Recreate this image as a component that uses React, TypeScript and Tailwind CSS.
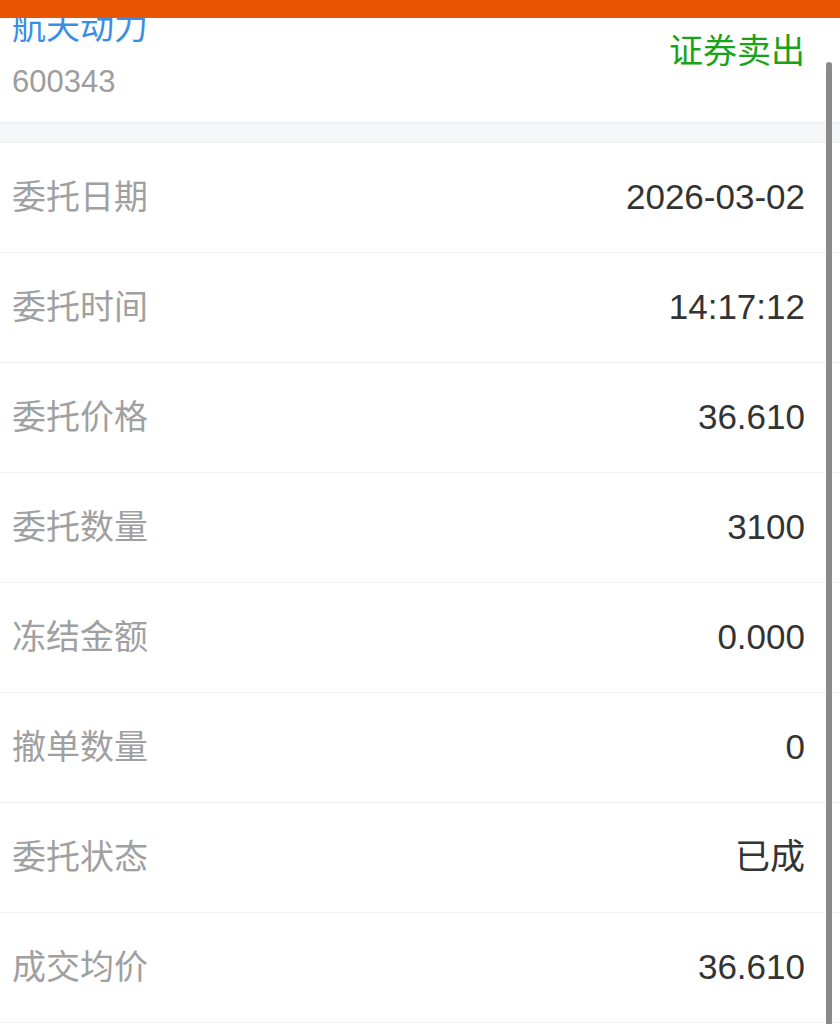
const rows = [
  { label: '委托日期', value: '2026-03-02' },
  { label: '委托时间', value: '14:17:12' },
  { label: '委托价格', value: '36.610' },
  { label: '委托数量', value: '3100' },
  { label: '冻结金额', value: '0.000' },
  { label: '撤单数量', value: '0' },
  { label: '委托状态', value: '已成' },
  { label: '成交均价', value: '36.610' },
];

const cjk = { fontFamily: '"Liberation Sans", "Noto Sans CJK SC", sans-serif' };

export default function App() {
  return (
    <div className="relative h-[1024px] w-full overflow-hidden bg-white" style={cjk}>
      <div className="absolute left-0 top-0 z-10 h-[18px] w-full bg-[#e85504]" />

      <div className="flex h-[122px] justify-between pl-3 pr-[35px]">
        <div>
          <div className="h-[54px] text-[34px] leading-[54px] text-[#3a8ee6]">航天动力</div>
          <div className="h-[56px] text-[31px] leading-[56px] text-[#9d9d9d]">600343</div>
        </div>
        <div className="mt-[29px] h-[44px] text-[34px] leading-[44px] text-[#1aa319]">证券卖出</div>
      </div>

      <div className="h-[21px] border-y border-[#eeeff1] bg-[#f5f6f8]" />

      <div>
        {rows.map((r) => (
          <div
            key={r.label}
            className="flex h-[110px] items-center justify-between border-b border-[#f2f2f2] pl-3 pr-[35px]"
          >
            <span className="text-[34px] text-[#a0a0a0]">{r.label}</span>
            <span className="text-[35px] text-[#333333]">{r.value}</span>
          </div>
        ))}
      </div>

      <div className="absolute right-[8px] top-[62px] h-[970px] w-[6px] rounded-full bg-[#8a8a8a]" />
    </div>
  );
}
